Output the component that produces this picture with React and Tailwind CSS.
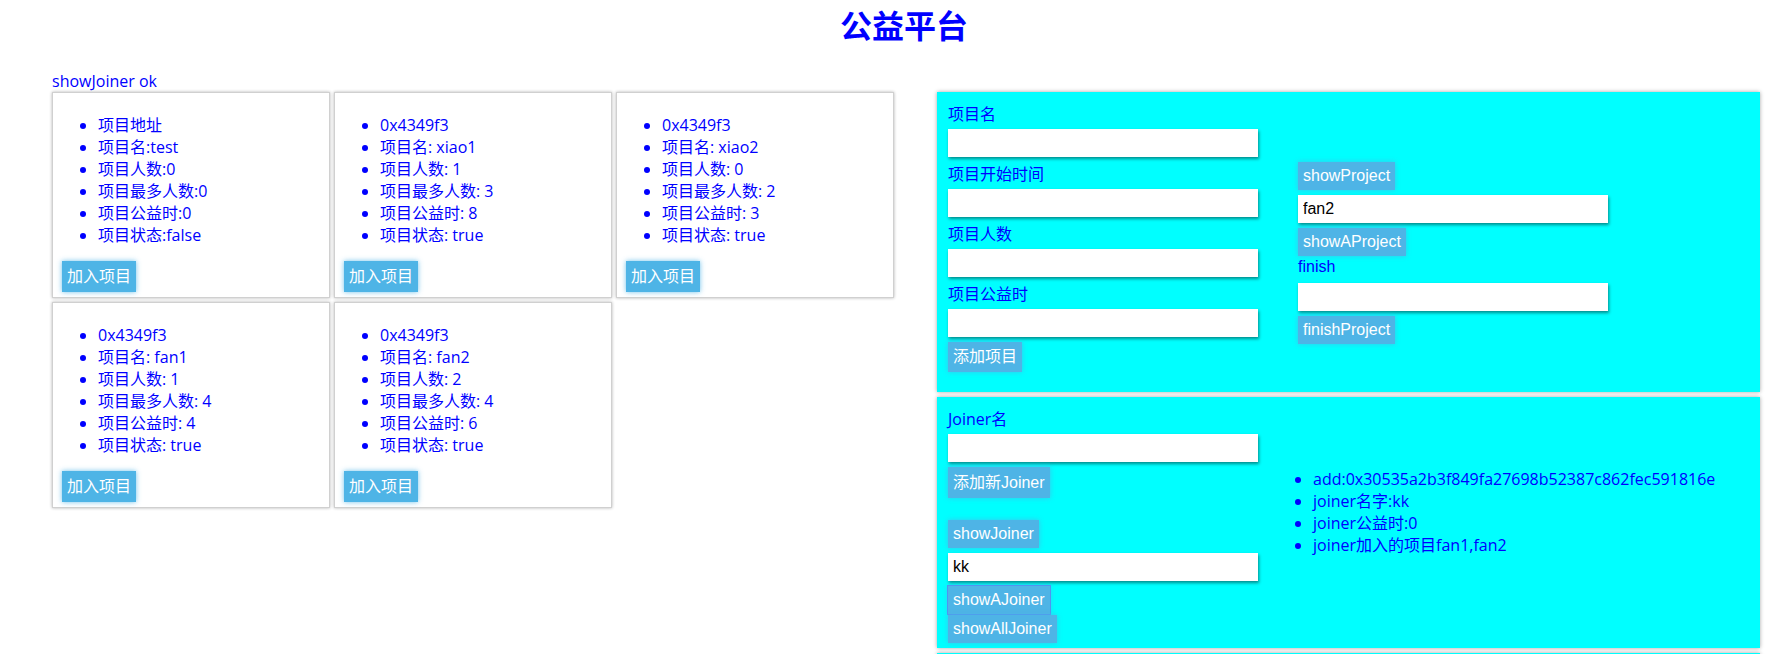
import { useState } from 'react';

const projects = [
  { addr: "项目地址", name: "项目名:test", count: "项目人数:0", max: "项目最多人数:0", hours: "项目公益时:0", state: "项目状态:false" },
  { addr: "0x4349f3", name: "项目名: xiao1", count: "项目人数: 1", max: "项目最多人数: 3", hours: "项目公益时: 8", state: "项目状态: true" },
  { addr: "0x4349f3", name: "项目名: xiao2", count: "项目人数: 0", max: "项目最多人数: 2", hours: "项目公益时: 3", state: "项目状态: true" },
  { addr: "0x4349f3", name: "项目名: fan1", count: "项目人数: 1", max: "项目最多人数: 4", hours: "项目公益时: 4", state: "项目状态: true" },
  { addr: "0x4349f3", name: "项目名: fan2", count: "项目人数: 2", max: "项目最多人数: 4", hours: "项目公益时: 6", state: "项目状态: true" },
];

const btn = "flex items-center bg-[#4eb4e6] text-white px-[5px] shadow-[0_0_5px_rgba(78,180,230,0.8)]";
const latinBtn = `${btn} h-[28px] font-['Liberation_Sans','Noto_Sans_CJK_SC',sans-serif] text-[16px]`;
const cjkBtn = `${btn} font-['Liberation_Sans','Noto_Sans_CJK_SC',sans-serif] text-[16px]`;
const field = "block w-[310px] h-[28px] bg-white px-[5px] text-[16px] text-black font-['Liberation_Sans',sans-serif] shadow-[1px_2px_3px_rgba(0,0,0,0.45)] outline-none";

function ProjectCard({ p }) {
  return (
    <div className="h-[206px] border border-[#d0d0d0] bg-white p-[5px] shadow-[0_0_3px_rgba(0,0,0,0.3)] flex flex-col">
      <ul className="list-disc pl-[40px] mt-[16px] mb-[15px] leading-[22px]">
        <li>{p.addr}</li>
        <li>{p.name}</li>
        <li>{p.count}</li>
        <li>{p.max}</li>
        <li>{p.hours}</li>
        <li>{p.state}</li>
      </ul>
      <button className={`${cjkBtn} h-[31px] ml-[4px] self-start`}>加入项目</button>
    </div>
  );
}

export default function App() {
  const [projectName, setProjectName] = useState("fan2");
  const [joinerName, setJoinerName] = useState("kk");

  return (
    <div className="min-h-screen bg-white text-[#0000ff] text-[16px] font-['Open_Sans','Noto_Sans_CJK_SC',sans-serif]">
      <h1 className="h-[70px] pt-[7px] pl-[30px] text-center text-[32px] leading-[40px] font-bold font-['Liberation_Sans','Noto_Sans_CJK_SC',sans-serif]">
        公益平台
      </h1>

      <div className="flex items-start pl-[52px]">
        {/* project cards */}
        <div className="w-[885px] shrink-0">
          <p className="leading-[22px]">showJoiner ok</p>
          <div className="grid grid-cols-[repeat(3,278px)] gap-[4px]">
            {projects.map((p, i) => (
              <ProjectCard key={i} p={p} />
            ))}
          </div>
        </div>

        {/* forms */}
        <div className="mt-[22px] w-[823px] flex flex-col gap-[5px]">
          <div className="bg-[#00ffff] shadow-[0_0_4px_rgba(0,0,0,0.35)] pt-[11px] pl-[11px] pb-[20px] flex items-start">
            <div className="w-[350px] flex flex-col items-start">
              <label className="leading-[22px]">项目名</label>
              <input className={`${field} mt-[4px]`} />
              <label className="leading-[22px] mt-[6px]">项目开始时间</label>
              <input className={`${field} mt-[4px]`} />
              <label className="leading-[22px] mt-[6px]">项目人数</label>
              <input className={`${field} mt-[4px]`} />
              <label className="leading-[22px] mt-[6px]">项目公益时</label>
              <input className={`${field} mt-[4px]`} />
              <button className={`${cjkBtn} h-[30px] mt-[5px]`}>添加项目</button>
            </div>
            <div className="mt-[59px] flex flex-col items-start">
              <button className={latinBtn}>showProject</button>
              <input className={`${field} mt-[5px]`} value={projectName} onChange={(e) => setProjectName(e.target.value)} />
              <button className={`${latinBtn} mt-[5px]`}>showAProject</button>
              <span className="leading-[22px] font-['Liberation_Sans',sans-serif]">finish</span>
              <input className={`${field} mt-[5px]`} />
              <button className={`${latinBtn} mt-[5px]`}>finishProject</button>
            </div>
          </div>

          <div className="bg-[#00ffff] shadow-[0_0_4px_rgba(0,0,0,0.35)] pt-[11px] pl-[11px] pb-[5px] flex items-start">
            <div className="w-[350px] flex flex-col items-start">
              <label className="leading-[22px]">Joiner名</label>
              <input className={`${field} mt-[4px]`} />
              <button className={`${cjkBtn} h-[31px] mt-[5px]`}>添加新Joiner</button>
              <button className={`${latinBtn} mt-[22px]`}>showJoiner</button>
              <input className={`${field} mt-[5px]`} value={joinerName} onChange={(e) => setJoinerName(e.target.value)} />
              <button className={`${latinBtn} mt-[5px] outline outline-1 outline-[#4f94f0]`}>showAJoiner</button>
              <button className={`${latinBtn} mt-[1px]`}>showAllJoiner</button>
            </div>
            <ul className="mt-[60px] list-disc pl-[15px] leading-[22px]">
              <li>add:0x30535a2b3f849fa27698b52387c862fec591816e</li>
              <li>joiner名字:kk</li>
              <li>joiner公益时:0</li>
              <li>joiner加入的项目fan1,fan2</li>
            </ul>
          </div>

          <div className="h-[120px] bg-[#00ffff] shadow-[0_0_4px_rgba(0,0,0,0.35)]"></div>
        </div>
      </div>
    </div>
  );
}
